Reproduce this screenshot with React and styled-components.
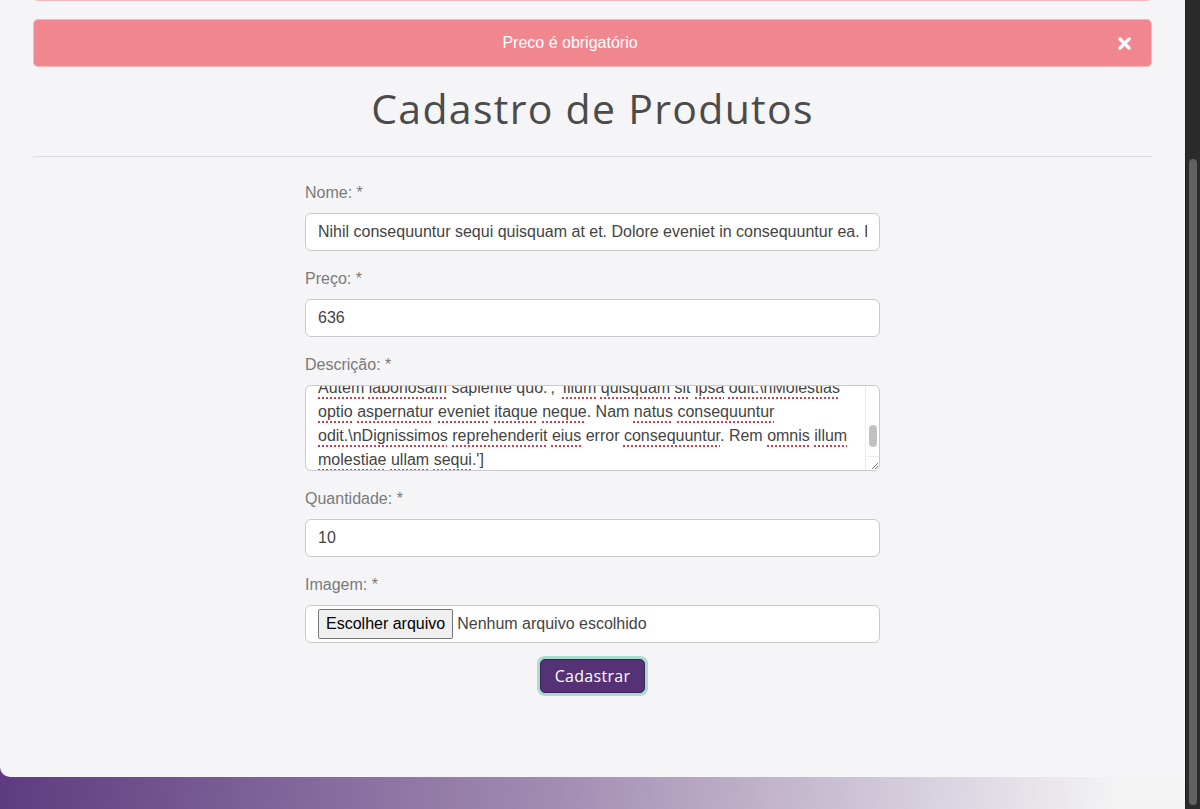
import React from 'react'
import styled, { createGlobalStyle } from 'styled-components'

const GlobalStyle = createGlobalStyle`
  html, body {
    margin: 0;
    padding: 0;
    background: #2b2b2b;
    overflow: hidden;
  }
  * {
    box-sizing: border-box;
  }
`

const Screen = styled.div`
  display: flex;
  height: 809px;
  width: 1200px;
`

const Viewport = styled.div`
  flex: 1;
  display: flex;
  flex-direction: column;
  padding-bottom: 32px;
  background: linear-gradient(95deg, #56317a 0%, #a28db2 50%, #f4f4f5 95%);
`

const Panel = styled.main`
  flex: 1;
  overflow: hidden;
  padding: 0 33px;
  background: #f5f5f7;
  border-bottom-left-radius: 10px;
`

const ScrollTrack = styled.div`
  width: 15px;
  padding: 159px 3px 4px 3px;
  background: #2b2b2b;
  border-left: 1px solid #1f1f1f;
`

const ScrollThumb = styled.div`
  height: 100%;
  border-radius: 4px;
  background: #616161;
`

const Alert = styled.div`
  display: flex;
  align-items: center;
  height: 48px;
  margin-top: ${p => p.$offset}px;
  background: #f0878f;
  border: 1px solid #f4b7bc;
  border-radius: 5px;
  color: #fff;
  font-family: "Liberation Sans", Arial, sans-serif;
  font-size: 16px;
`

const AlertText = styled.span`
  flex: 1;
  text-align: center;
`

const CloseButton = styled.button`
  width: 36px;
  height: 36px;
  margin-right: 9px;
  display: flex;
  align-items: center;
  justify-content: center;
  background: none;
  border: none;
  padding: 0;
`

const Title = styled.h1`
  margin: 17px 0 0;
  text-align: center;
  font-family: "Open Sans", sans-serif;
  font-weight: 400;
  font-size: 41px;
  letter-spacing: 1.3px;
  line-height: 48px;
  color: #4b4b4b;
`

const Divider = styled.hr`
  margin: 24px 0 0;
  border: none;
  border-top: 1px solid #dcdcdf;
`

const Form = styled.form`
  width: 575px;
  margin: 26px auto 0;
  font-family: "Liberation Sans", Arial, sans-serif;
  font-size: 16px;
`

const Field = styled.div`
  margin-bottom: 18px;
`

const Label = styled.label`
  display: block;
  line-height: 18px;
  padding-top: 1px;
  margin-bottom: 11px;
  color: #7a7a7a;
`

const Input = styled.input`
  display: block;
  width: 100%;
  height: 38px;
  padding: 0 12px;
  border: 1px solid #c9c9cd;
  border-radius: 6px;
  background: #fff;
  color: #444;
  font-family: inherit;
  font-size: 16px;
  outline: none;
`

const TextBox = styled.div`
  display: flex;
  height: 86px;
  border: 1px solid #c9c9cd;
  border-radius: 6px;
  background: #fff;
  overflow: hidden;
  color: #444;
`

const TextBody = styled.div`
  flex: 1;
  padding: 0 12px;
  overflow: hidden;
`

const TextLines = styled.div`
  margin-top: -10px;
`

const Line = styled.div`
  white-space: nowrap;
  line-height: 24px;
`

const Typo = styled.span`
  text-decoration: underline dotted #e0344b;
  text-decoration-thickness: 1.5px;
  text-underline-offset: 4px;
`

const ScrollCol = styled.div`
  width: 14px;
  display: flex;
  flex-direction: column;
  border-left: 1px solid #ededed;
`

const MiniThumb = styled.div`
  width: 8px;
  height: 22px;
  margin: 39px auto 0;
  border-radius: 4px;
  background: #c1c1c1;
`

const Grip = styled.div`
  margin-top: auto;
  height: 14px;
  border-top: 1px solid #ededed;
  display: flex;
  align-items: flex-end;
  justify-content: flex-end;
`

const FileBox = styled.div`
  display: flex;
  align-items: center;
  height: 38px;
  padding: 0 12px;
  border: 1px solid #c9c9cd;
  border-radius: 6px;
  background: #fff;
`

const FileButton = styled.button`
  height: 30px;
  padding: 0 7px;
  background: #efefef;
  border: 1px solid #767676;
  border-radius: 2px;
  color: #000;
  font-family: "Liberation Sans", Arial, sans-serif;
  font-size: 16px;
`

const FileName = styled.span`
  margin-left: 4px;
  color: #444;
`

const Actions = styled.div`
  display: flex;
  justify-content: center;
  margin-top: -2px;
`

const Submit = styled.button`
  height: 34px;
  padding: 0 14px;
  background: #553176;
  border: 1px solid #3e2058;
  border-radius: 5px;
  box-shadow: 0 0 0 3px #a9dccd;
  color: #fff;
  font-family: "Open Sans", sans-serif;
  font-size: 16px;
  letter-spacing: 0.3px;
`

const descLines = [
  [['Autem', 1], ' ', ['laboriosam', 1], ' sapiente quo.\', \'', ['Illum', 1], ' ', ['quisquam', 1], ' ', ['sit', 1], ' ', ['ipsa', 1], ' ', ['odit.\\nMolestias', 1]],
  [['optio', 1], ' ', ['aspernatur', 1], ' ', ['eveniet', 1], ' ', ['itaque', 1], ' ', ['neque', 1], '. Nam ', ['natus', 1], ' ', ['consequuntur', 1]],
  [['odit.\\nDignissimos', 1], ' ', ['reprehenderit', 1], ' ', ['eius', 1], ' error ', ['consequuntur', 1], '. Rem ', ['omnis', 1], ' ', ['illum', 1]],
  [['molestiae', 1], ' ', ['ullam', 1], ' ', ['sequi', 1], '.\']'],
]

function CloseIcon() {
  return (
    <svg width="13" height="13" viewBox="0 0 13 13">
      <path d="M2 2 L11 11 M11 2 L2 11" stroke="#fff" strokeWidth="3.4" strokeLinecap="round" />
    </svg>
  )
}

function GripIcon() {
  return (
    <svg width="10" height="10" viewBox="0 0 10 10">
      <path d="M9 3 L3 9 M9 6 L6 9" stroke="#777" strokeWidth="1" />
    </svg>
  )
}

export default function App() {
  return (
    <Screen>
      <GlobalStyle />
      <Viewport>
        <Panel>
          <Alert $offset={-47} />
          <Alert $offset={18}>
            <AlertText>Preco é obrigatório</AlertText>
            <CloseButton type="button" aria-label="Fechar">
              <CloseIcon />
            </CloseButton>
          </Alert>
          <Title>Cadastro de Produtos</Title>
          <Divider />
          <Form onSubmit={e => e.preventDefault()}>
            <Field>
              <Label>Nome: *</Label>
              <Input readOnly defaultValue="Nihil consequuntur sequi quisquam at et. Dolore eveniet in consequuntur ea. Itaque" />
            </Field>
            <Field>
              <Label>Preço: *</Label>
              <Input readOnly defaultValue="636" />
            </Field>
            <Field>
              <Label>Descrição: *</Label>
              <TextBox>
                <TextBody>
                  <TextLines>
                    {descLines.map((parts, i) => (
                      <Line key={i}>
                        {parts.map((p, j) =>
                          Array.isArray(p) ? <Typo key={j}>{p[0]}</Typo> : <span key={j}>{p}</span>
                        )}
                      </Line>
                    ))}
                  </TextLines>
                </TextBody>
                <ScrollCol>
                  <MiniThumb />
                  <Grip>
                    <GripIcon />
                  </Grip>
                </ScrollCol>
              </TextBox>
            </Field>
            <Field>
              <Label>Quantidade: *</Label>
              <Input readOnly defaultValue="10" />
            </Field>
            <Field>
              <Label>Imagem: *</Label>
              <FileBox>
                <FileButton type="button">Escolher arquivo</FileButton>
                <FileName>Nenhum arquivo escolhido</FileName>
              </FileBox>
            </Field>
            <Actions>
              <Submit type="submit">Cadastrar</Submit>
            </Actions>
          </Form>
        </Panel>
      </Viewport>
      <ScrollTrack>
        <ScrollThumb />
      </ScrollTrack>
    </Screen>
  )
}
